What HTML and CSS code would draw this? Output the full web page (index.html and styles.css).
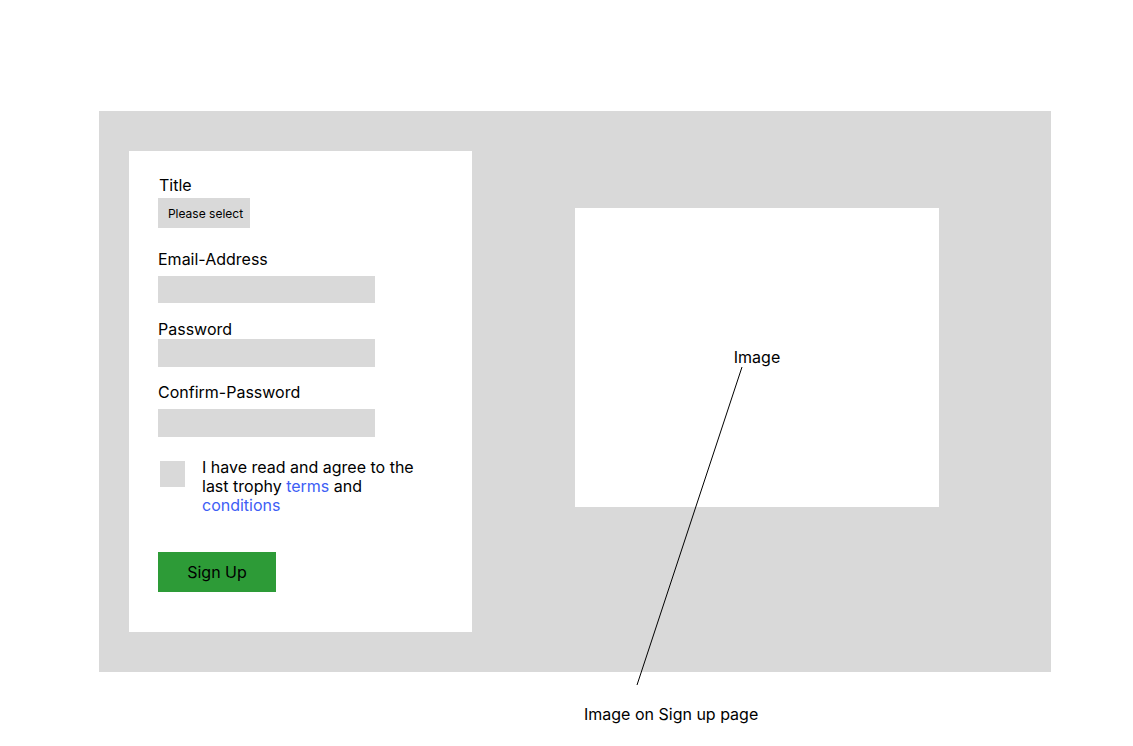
FILE: index.html
```html
<!DOCTYPE html>
<html>
<head>
<meta charset="utf-8">
<link rel="stylesheet" href="styles.css">
</head>
<body>
<div class="page">
  <div class="panel">
    <form class="card">
      <div class="label label-title">Title</div>
      <div class="select">Please select</div>
      <div class="label label-email">Email-Address</div>
      <div class="input input-email"></div>
      <div class="label label-pass">Password</div>
      <div class="input input-pass"></div>
      <div class="label label-confirm">Confirm-Password</div>
      <div class="input input-confirm"></div>
      <div class="agree">
        <div class="checkbox"></div>
        <p class="agree-text">I have read and agree to the last trophy <span class="link">terms</span> and <span class="link">conditions</span></p>
      </div>
      <div class="btn">Sign Up</div>
    </form>
    <div class="image-box">Image</div>
  </div>
  <div class="caption">Image on Sign up page</div>
  <svg class="pointer" width="1133" height="746" viewBox="0 0 1133 746">
    <line x1="742" y1="367" x2="637" y2="685" stroke="#000" stroke-width="1"/>
  </svg>
</div>
</body>
</html>
```

FILE: styles.css
```css
html, body {
  margin: 0;
  padding: 0;
  background: #fff;
}
body {
  font-family: Inter, "Noto Sans", "Liberation Sans", sans-serif;
  color: #000;
  width: 1133px;
  height: 746px;
  overflow: hidden;
}
.page {
  position: relative;
  width: 1133px;
  height: 746px;
  padding-top: 111px;
  box-sizing: border-box;
}
.panel {
  margin-left: 99px;
  width: 952px;
  height: 561px;
  background: #d9d9d9;
  display: flex;
  align-items: flex-start;
  padding: 40px 0 0 30px;
  box-sizing: border-box;
}
.card {
  width: 343px;
  height: 481px;
  background: #fff;
  box-sizing: border-box;
  padding: 24px 0 0 29px;
  margin: 0;
  display: flex;
  flex-direction: column;
  align-items: flex-start;
}
.label {
  font-size: 16px;
  line-height: 20px;
}
.label-title { margin-left: 1px; }
.select {
  margin-top: 3px;
  width: 92px;
  height: 30px;
  background: #d9d9d9;
  font-size: 12px;
  line-height: 31px;
  text-align: center;
  box-sizing: border-box;
  padding-left: 3px;
}
.label-email { margin-top: 21px; }
.input {
  width: 217px;
  height: 28px;
  background: #d9d9d9;
}
.input-email { margin-top: 7px; height: 27px; }
.label-pass { margin-top: 16px; }
.input-pass { margin-top: 0; }
.label-confirm { margin-top: 15px; }
.input-confirm { margin-top: 7px; }
.agree {
  margin-top: 21px;
  display: flex;
  align-items: flex-start;
}
.checkbox {
  width: 25px;
  height: 26px;
  background: #d9d9d9;
  margin: 3px 0 0 2px;
  flex: none;
}
.agree-text {
  margin: 0 0 0 17px;
  width: 230px;
  font-size: 16px;
  line-height: 19px;
}
.link { color: #3d5ef5; }
.btn {
  margin-top: 37px;
  width: 118px;
  height: 40px;
  background: #2d9b37;
  font-size: 16px;
  line-height: 40px;
  text-align: center;
}
.image-box {
  margin: 57px 0 0 103px;
  width: 364px;
  height: 299px;
  box-sizing: border-box;
  padding-bottom: 2px;
  background: #fff;
  display: flex;
  align-items: center;
  justify-content: center;
  font-size: 16px;
  line-height: 20px;
}
.caption {
  margin: 32px 0 0 584px;
  font-size: 16px;
  line-height: 20px;
}
.pointer {
  position: absolute;
  left: 0;
  top: 0;
  pointer-events: none;
}
```
